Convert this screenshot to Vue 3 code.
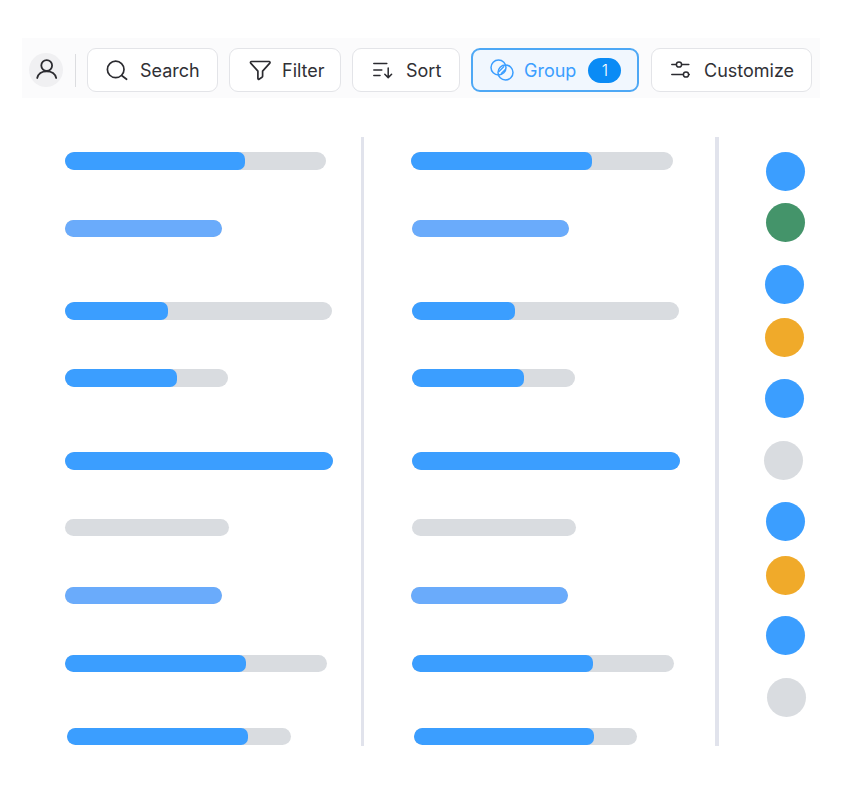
<script setup>
const firstCol = [
  { gap: 15, left: 0, w: 261, fill: 180, h: 18 },
  { gap: 50, left: 0, w: 157, fill: 157, h: 17, light: true },
  { gap: 65, left: 0, w: 267, fill: 103, h: 18 },
  { gap: 49, left: 0, w: 163, fill: 112, h: 18 },
  { gap: 65, left: 0, w: 268, fill: 268, h: 18 },
  { gap: 49, left: 0, w: 164, fill: 0, h: 17 },
  { gap: 51, left: 0, w: 157, fill: 157, h: 17, light: true },
  { gap: 51, left: 0, w: 262, fill: 181, h: 17 },
  { gap: 56, left: 2, w: 224, fill: 181, h: 17 },
]
const secondCol = [
  { gap: 15, left: 0, w: 262, fill: 181, h: 18 },
  { gap: 50, left: 1, w: 157, fill: 157, h: 17, light: true },
  { gap: 65, left: 1, w: 267, fill: 103, h: 18 },
  { gap: 49, left: 1, w: 163, fill: 112, h: 18 },
  { gap: 65, left: 1, w: 268, fill: 268, h: 18 },
  { gap: 49, left: 1, w: 164, fill: 0, h: 17 },
  { gap: 51, left: 0, w: 157, fill: 157, h: 17, light: true },
  { gap: 51, left: 1, w: 262, fill: 181, h: 17 },
  { gap: 56, left: 3, w: 223, fill: 180, h: 17 },
]
const dots = [
  { c: '#3b9eff', x: 2, gap: 15 },
  { c: '#44946a', x: 2, gap: 12 },
  { c: '#3b9eff', x: 1, gap: 23 },
  { c: '#f0aa2a', x: 1, gap: 14 },
  { c: '#3b9eff', x: 1, gap: 22 },
  { c: '#d9dce0', x: 0, gap: 23 },
  { c: '#3b9eff', x: 2, gap: 22 },
  { c: '#f0aa2a', x: 2, gap: 15 },
  { c: '#3b9eff', x: 2, gap: 21 },
  { c: '#d9dce0', x: 3, gap: 23 },
]
</script>

<template>
  <div class="page">
    <div class="toolbar">
      <span class="avatar">
        <svg width="24" height="24" viewBox="0 0 24 24" fill="none" stroke="#2b2b30" stroke-width="1.8" stroke-linecap="round">
          <circle cx="12.700" cy="7.500" r="5.400" />
          <path d="M3.200 20c1-4 4.800-6.600 9.500-6.600s8.500 2.600 9.500 6.600" />
        </svg>
      </span>
      <span class="rule"></span>
      <button class="btn search">
        <svg width="24" height="24" viewBox="0 0 24 24" fill="none" stroke="#2b2b30" stroke-width="1.700" stroke-linecap="round">
          <circle cx="10.700" cy="11.400" r="8.300" />
          <path d="M17 17.800 21.600 21.300" />
        </svg>
        <span>Search</span>
      </button>
      <button class="btn filter">
        <svg width="24" height="24" viewBox="0 0 24 24" fill="none" stroke="#2b2b30" stroke-width="1.700" stroke-linejoin="round" stroke-linecap="round">
          <path d="M3.500 3.500h17.500c.9 0 1.300 1 .8 1.600l-7.200 8v5.200c0 .5-.2.800-.6 1l-3 1.900c-.5.300-1.100 0-1.100-.6v-7.500l-7.200-8c-.5-.600-.100-1.600.8-1.600z" />
        </svg>
        <span>Filter</span>
      </button>
      <button class="btn sort">
        <svg width="20" height="20" viewBox="0 0 20 20" fill="none" stroke="#2b2b30" stroke-width="1.500" stroke-linecap="round" stroke-linejoin="round">
          <path d="M.8 3.500h13M.8 10h8M.8 15.500h6.200M15.200 8v9.500M11.800 14.200l3.400 3.400 3.400-3.400" />
        </svg>
        <span>Sort</span>
      </button>
      <button class="btn group">
        <svg width="24" height="24" viewBox="0 0 24 24" fill="none" stroke="#3b9eff" stroke-width="1.500">
          <circle cx="8.500" cy="9.500" r="7.500" />
          <circle cx="15.500" cy="14.500" r="7.500" />
          <path d="M8.800 13.700l5.400-5.400M11 15.800l4.600-4.600" stroke-width="1.300" />
        </svg>
        <span>Group</span>
        <span class="count">1</span>
      </button>
      <button class="btn customize">
        <svg width="20" height="20" viewBox="0 0 20 20" fill="none" stroke="#2b2b30" stroke-width="1.500" stroke-linecap="round">
          <path d="M.8 4.500h4.500M10.800 4.500h7M.8 14.500h11.500M17.800 14.500h.4" />
          <circle cx="8" cy="4.500" r="2.600" />
          <circle cx="15" cy="14.500" r="2.600" />
        </svg>
        <span>Customize</span>
      </button>
    </div>

    <div class="board">
      <div class="column first">
        <div
          v-for="(b, i) in firstCol"
          :key="i"
          class="track"
          :style="{ marginTop: b.gap + 'px', marginLeft: b.left + 'px', width: b.w + 'px', height: b.h + 'px' }"
        >
          <div class="fill" :class="{ light: b.light }" :style="{ width: b.fill + 'px' }"></div>
        </div>
      </div>
      <div class="column second">
        <div
          v-for="(b, i) in secondCol"
          :key="i"
          class="track"
          :style="{ marginTop: b.gap + 'px', marginLeft: b.left + 'px', width: b.w + 'px', height: b.h + 'px' }"
        >
          <div class="fill" :class="{ light: b.light }" :style="{ width: b.fill + 'px' }"></div>
        </div>
      </div>
      <div class="dots">
        <span
          v-for="(d, i) in dots"
          :key="i"
          class="dot"
          :style="{ background: d.c, marginLeft: d.x + 'px', marginTop: d.gap + 'px' }"
        ></span>
      </div>
    </div>
  </div>
</template>

<style scoped>
.page {
  width: 866px;
  height: 794px;
  background: #fff;
  padding-top: 38px;
  box-sizing: border-box;
  overflow: hidden;
  font-family: Inter, "Liberation Sans", sans-serif;
}
.toolbar {
  display: flex;
  align-items: center;
  margin-left: 22px;
  width: 798px;
  height: 60px;
  box-sizing: border-box;
  padding: 4px 0 0 7px;
  background: #fbfbfc;
}
.avatar {
  width: 34px;
  height: 34px;
  border-radius: 50%;
  background: #f0f0f2;
  display: flex;
  align-items: center;
  justify-content: center;
  flex: none;
}
.rule {
  width: 1px;
  height: 33px;
  background: #dcdde0;
  margin: 0 11px 0 12px;
  flex: none;
}
.btn {
  height: 44px;
  box-sizing: border-box;
  display: flex;
  align-items: center;
  background: #fff;
  border: 1.5px solid #e3e4e8;
  border-radius: 9px;
  padding: 0;
  font-family: inherit;
  font-size: 18px;
  font-weight: 400;
  color: #303035;
  flex: none;
}
.search { width: 131px; padding-left: 17px; gap: 11px; margin-right: 11px; }
.filter { width: 112px; padding-left: 18px; gap: 10px; margin-right: 11px; }
.sort { width: 108px; padding-left: 20px; gap: 13px; margin-right: 11px; }
.group {
  width: 168px;
  padding-left: 17px;
  gap: 10px;
  margin-right: 12px;
  background: #f1f7fe;
  border: 2px solid #4ea8f5;
  color: #3b9eff;
}
.count {
  width: 33px;
  height: 25px;
  margin-left: 2px;
  border-radius: 13px;
  background: #0a8bf5;
  color: #fff;
  font-size: 16px;
  font-weight: 300;
  display: flex;
  align-items: center;
  justify-content: center;
}
.customize { width: 161px; padding-left: 19px; gap: 13px; }
.board {
  display: flex;
  height: 609px;
  margin-top: 39px;
}
.column {
  box-sizing: border-box;
  flex: none;
}
.first { width: 296px; margin-left: 65px; }
.second {
  width: 358px;
  padding-left: 47px;
  border-left: 3px solid #e1e3ec;
  border-right: 4px solid #e1e3ec;
}
.track {
  background: #d9dce0;
  border-radius: 9px;
  overflow: hidden;
}
.fill {
  height: 100%;
  background: #3b9eff;
  border-radius: 7px;
}
.fill.light {
  background: #6aabfb;
}
.dots {
  display: flex;
  flex-direction: column;
  padding-left: 44.5px;
}
.dot {
  display: block;
  width: 39px;
  height: 39px;
  border-radius: 50%;
  flex: none;
}
</style>
